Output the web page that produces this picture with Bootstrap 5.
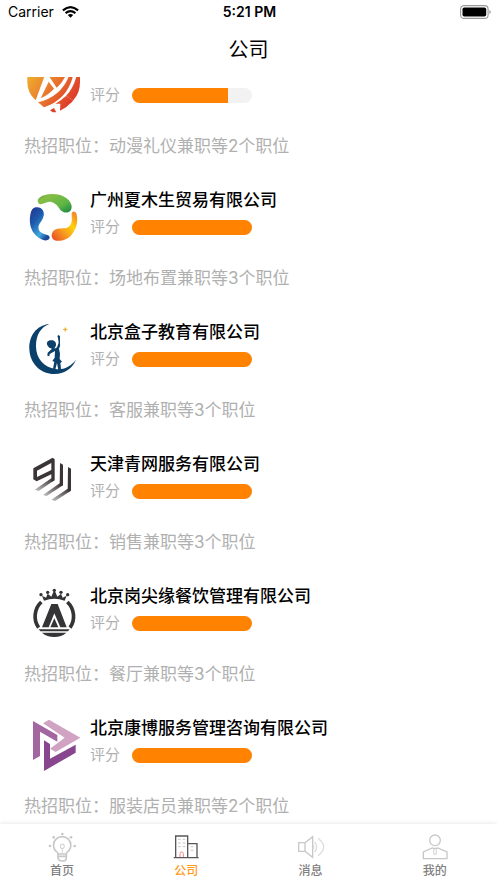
<!DOCTYPE html>
<html lang="zh-CN">
<head>
<meta charset="utf-8">
<meta name="viewport" content="width=device-width, initial-scale=1">
<title>公司</title>
<link href="https://cdn.jsdelivr.net/npm/bootstrap@5.3.0/dist/css/bootstrap.min.css" rel="stylesheet">
<style>
body { font-family: Inter, "Noto Sans CJK SC", sans-serif; color: #000; background: #fff; }
.statusbar { height: 24px; padding: 0 6px 0 8px; font-size: 14px; line-height: 24px; }
.page-title { font-size: 20px; line-height: 53px; font-weight: 400; }
.company-list { gap: 26px; padding: 0 24px 3px; min-height: 0; }
.company-top { gap: 6px; height: 60px; }
.company-logo { width: 60px; height: 60px; }
.company-text { padding-bottom: 6px; }
.company-name { font-size: 17px; line-height: 26px; font-weight: 500; }
.score { gap: 12px; height: 28px; font-size: 15px; color: #b0b0b0; }
.score .progress { width: 120px; height: 15px; border-radius: 8px; background: #f2f2f2; }
.score .progress-bar { background: #ff8200; }
.jobs { margin-top: 16px; font-size: 17px; line-height: 30px; color: #b0b0b0; }
.tabbar { height: 59px; padding-top: 8px; background: #fff; box-shadow: 0 0 5px rgba(0,0,0,.12); }
.tab-item { font-size: 12px; line-height: 18px; font-weight: 500; color: #808080; }
.tab-item.active { color: #ff9a1a; }
.tab-item svg { width: 30px; height: 30px; }
</style>
</head>
<body>
<div class="d-flex flex-column vh-100 overflow-hidden">
  <header class="flex-shrink-0">
    <div class="statusbar row g-0 align-items-center">
      <div class="col d-flex align-items-center gap-2">
        <span>Carrier</span>
        <svg width="17" height="12" viewBox="0 0 17 12" aria-hidden="true"><g fill="none" stroke="#000" stroke-width="2.2"><path d="M.9 4.4Q8.500-2 16.100 4.400"/><path d="M3.600 7.200Q8.500 3.200 13.400 7.200"/></g><path d="M8.500 11.800 5.800 9Q8.500 7 11.200 9Z"/></svg>
      </div>
      <div class="col-auto fw-semibold">5:21 PM</div>
      <div class="col d-flex justify-content-end">
        <svg width="31" height="14" viewBox="0 0 31 14" aria-hidden="true"><rect x=".6" y=".6" width="27.500" height="12.800" rx="3.500" fill="none" stroke="#999" stroke-width="1.100"/><rect x="2.500" y="2.500" width="23.700" height="9" rx="1.800"/><path d="M29.400 5v4q1.400-.6 1.400-2t-1.400-2" fill="#999"/></svg>
      </div>
    </div>
    <h1 class="page-title text-center m-0">公司</h1>
  </header>

  <main class="company-list flex-fill d-flex flex-column justify-content-end overflow-hidden">
    <article class="flex-shrink-0">
      <div class="company-top d-flex">
        <svg class="company-logo flex-shrink-0" viewBox="0 -54 180 180" aria-hidden="true">
          <defs><linearGradient id="g1" gradientUnits="userSpaceOnUse" x1="10" y1="0" x2="150" y2="100"><stop offset="0" stop-color="#f0b22e"/><stop offset=".5" stop-color="#e8752e"/><stop offset="1" stop-color="#db3029"/></linearGradient></defs>
          <g fill="url(#g1)">
            <path d="M10 0H65L35 82Q10 60 10 28Z"/>
            <path d="M74 26 90 47Q75 64 50 76Z"/>
            <path d="M76 0H128Q118 28 98 44L78 14Z"/>
            <path d="M42 88Q116 70 138 0H149Q134 78 60 103Z"/>
            <path d="M160 0H168V28Q168 60 148 82L126 69Q150 44 160 0Z"/>
            <path d="M120 74 144 86Q128 104 108 113L109 92 94 92Q108 84 120 74Z"/>
            <path d="M78 112 90 105 97 118H86Z" fill="#df432a"/>
            <path d="M126 69 148 82 140 91 116 77Z"/>
          </g>
        </svg>
        <div class="company-text d-flex flex-column justify-content-end">
          <div class="score d-flex align-items-center"><span>评分</span><div class="progress" role="progressbar" aria-label="评分" aria-valuenow="80" aria-valuemin="0" aria-valuemax="100"><div class="progress-bar" style="width:80%"></div></div></div>
        </div>
      </div>
      <p class="jobs mb-0">热招职位：动漫礼仪兼职等2个职位</p>
    </article>

    <article class="flex-shrink-0">
      <div class="company-top d-flex">
        <svg class="company-logo flex-shrink-0" viewBox="12 9 180 180" aria-hidden="true">
          <defs><linearGradient id="g2" x1="0" y1="0" x2="1" y2="1"><stop offset="0" stop-color="#4a9b42"/><stop offset=".2" stop-color="#87bd45"/><stop offset=".65" stop-color="#5fb645"/><stop offset="1" stop-color="#168442"/></linearGradient><linearGradient id="g3" x1="0" y1="0" x2=".7" y2="1"><stop offset="0" stop-color="#25318b"/><stop offset=".4" stop-color="#1c59ac"/><stop offset=".8" stop-color="#42a8df"/><stop offset="1" stop-color="#1d4b9a"/></linearGradient><linearGradient id="g4" x1="1" y1="0" x2="0" y2="1"><stop offset="0" stop-color="#ed742b"/><stop offset=".35" stop-color="#ffd20a"/><stop offset=".6" stop-color="#f8a020"/><stop offset="1" stop-color="#e74527"/></linearGradient></defs>
          <path d="M55 56C47 44 66 31 95 30C125 29 149 44 154 62C159 80 144 90 130 84C115 78 117 60 94 54C79 50 70 63 58 60Z" fill="url(#g2)"/>
          <path d="M47 70C64 66 76 82 70 99C64 117 51 121 57 139C63 153 88 149 89 160C89 173 69 172 52 158C33 143 26 118 31 92C33 79 38 72 47 70Z" fill="url(#g3)"/>
          <path d="M155 91C155 79 167 80 170 92C175 112 169 135 155 152C141 169 115 175 101 167C92 161 93 145 104 138C119 127 139 141 151 123C158 111 155 102 155 91Z" fill="url(#g4)"/>
        </svg>
        <div class="company-text d-flex flex-column justify-content-end">
          <h2 class="company-name m-0">广州夏木生贸易有限公司</h2>
          <div class="score d-flex align-items-center"><span>评分</span><div class="progress" role="progressbar" aria-label="评分" aria-valuenow="100" aria-valuemin="0" aria-valuemax="100"><div class="progress-bar" style="width:100%"></div></div></div>
        </div>
      </div>
      <p class="jobs mb-0">热招职位：场地布置兼职等3个职位</p>
    </article>

    <article class="flex-shrink-0">
      <div class="company-top d-flex">
        <svg class="company-logo flex-shrink-0" viewBox="12 9 180 180" aria-hidden="true" fill="#0b406b">
          <path d="M88 24C48 28 27 61 28 98C29 143 63 174 103 174C134 173 158 157 168 131C152 152 130 162 107 159C71 155 48 127 48 91C48 58 61 34 88 24Z"/>
          <path d="M81 85C79 76 88 71 96 73C104 73 109 80 108 88C107 93 103 95 104 98L111 94 116 80 114 65 112 60 116 57 120 61 120 80Q122 91 117 98L120 113 119 129 126 137 121 141 123 158 115 162 111 141 106 160 99 158 103 137 97 135 104 125 105 105 89 114 88 121 82 119 83 110 96 98 88 95Q82 91 81 85Z"/>
          <path d="M136 32 138 38 145 40 138 43 136 49 133 43 127 40 133 38Z" fill="#efb43b"/>
        </svg>
        <div class="company-text d-flex flex-column justify-content-end">
          <h2 class="company-name m-0">北京盒子教育有限公司</h2>
          <div class="score d-flex align-items-center"><span>评分</span><div class="progress" role="progressbar" aria-label="评分" aria-valuenow="100" aria-valuemin="0" aria-valuemax="100"><div class="progress-bar" style="width:100%"></div></div></div>
        </div>
      </div>
      <p class="jobs mb-0">热招职位：客服兼职等3个职位</p>
    </article>

    <article class="flex-shrink-0">
      <div class="company-top d-flex">
        <svg class="company-logo flex-shrink-0" viewBox="12 6 180 180" aria-hidden="true">
          <defs><linearGradient id="g5" x1="1" y1="0" x2="0" y2="1"><stop offset=".25" stop-color="#3b3537"/><stop offset="1" stop-color="#3b3537" stop-opacity="0"/></linearGradient></defs>
          <path d="M40 58 98 26 104 31V94L94 100V76L50 97 40 91ZM51 65V84L94 63V42Z" fill="#3b3537" fill-rule="evenodd"/>
          <path d="M94 88 104 93 56 126 44 122Z M119 103 129 109 80 141 69 138Z M143 119 153 125 105 156 94 152Z" fill="url(#g5)"/>
          <path d="M120 42 129 47V109L119 111Z M144 54 153 59V125L143 128Z" fill="#3b3537"/>
        </svg>
        <div class="company-text d-flex flex-column justify-content-end">
          <h2 class="company-name m-0">天津青网服务有限公司</h2>
          <div class="score d-flex align-items-center"><span>评分</span><div class="progress" role="progressbar" aria-label="评分" aria-valuenow="100" aria-valuemin="0" aria-valuemax="100"><div class="progress-bar" style="width:100%"></div></div></div>
        </div>
      </div>
      <p class="jobs mb-0">热招职位：销售兼职等3个职位</p>
    </article>

    <article class="flex-shrink-0">
      <div class="company-top d-flex">
        <svg class="company-logo flex-shrink-0" viewBox="12 12 180 180" aria-hidden="true" fill="#343436">
          <path d="M64 69A59 59 0 0 0 56 146M142 69A59 59 0 0 1 150 146" fill="none" stroke="#343436" stroke-width="11"/>
          <path d="M56 151H149L144 157H61ZM66 161H139Q124 174 103 174Q81 174 66 161Z"/>
          <path d="M94 75H113L140 145H121L103 103 86 145H66Z M103 118 115 145H91Z"/>
          <path d="M66 50 78 56 83 44 94 53 101 37H105L112 53 123 44 128 56 140 50 134 65Q103 53 72 65Z"/>
          <circle cx="63" cy="47" r="5"/><circle cx="83" cy="40" r="5"/><circle cx="103" cy="34" r="5"/><circle cx="123" cy="40" r="5"/><circle cx="143" cy="47" r="5"/>
        </svg>
        <div class="company-text d-flex flex-column justify-content-end">
          <h2 class="company-name m-0">北京岗尖缘餐饮管理有限公司</h2>
          <div class="score d-flex align-items-center"><span>评分</span><div class="progress" role="progressbar" aria-label="评分" aria-valuenow="100" aria-valuemin="0" aria-valuemax="100"><div class="progress-bar" style="width:100%"></div></div></div>
        </div>
      </div>
      <p class="jobs mb-0">热招职位：餐厅兼职等3个职位</p>
    </article>

    <article class="flex-shrink-0">
      <div class="company-top d-flex">
        <svg class="company-logo flex-shrink-0" viewBox="12 12 180 180" aria-hidden="true">
          <path d="M39 30 112 72V92L60 62V135L39 147Z" fill="#a366a0"/>
          <path d="M69 37 87 26 181 80 107 123 90 113 134 80Z" fill="#d1a3c3"/>
          <path d="M72 88 90 99V143L167 101V125L72 180Z" fill="#87468e"/>
        </svg>
        <div class="company-text d-flex flex-column justify-content-end">
          <h2 class="company-name m-0">北京康博服务管理咨询有限公司</h2>
          <div class="score d-flex align-items-center"><span>评分</span><div class="progress" role="progressbar" aria-label="评分" aria-valuenow="100" aria-valuemin="0" aria-valuemax="100"><div class="progress-bar" style="width:100%"></div></div></div>
        </div>
      </div>
      <p class="jobs mb-0">热招职位：服装店员兼职等2个职位</p>
    </article>
  </main>

  <nav class="tabbar flex-shrink-0 position-relative d-flex" aria-label="主导航">
    <a href="#" class="tab-item flex-fill w-25 d-flex flex-column align-items-center text-decoration-none">
      <svg viewBox="141 36 90 90" aria-hidden="true" fill="none" stroke="#c8c8c8" stroke-width="5"><path d="M174 101Q174 97 168 94A26 26 0 1 1 205 94Q199 97 199 101V113Q199 123 187 123T174 113ZM174 102H199M175 109H198"/><ellipse cx="187" cy="79" rx="6" ry="7" stroke-width="3"/><path d="M187 86V99" stroke-width="2"/><g fill="#c8c8c8" stroke="none"><circle cx="187" cy="42" r="4"/><circle cx="161" cy="52" r="4"/><circle cx="213" cy="52" r="4"/><circle cx="150" cy="78" r="4"/><circle cx="224" cy="78" r="4"/></g></svg>
      <span>首页</span>
    </a>
    <a href="#" class="tab-item active flex-fill w-25 d-flex flex-column align-items-center text-decoration-none" aria-current="page">
      <svg viewBox="514 36 90 90" aria-hidden="true" fill="none" stroke="#57575a" stroke-width="4"><path d="M522 113H597M528 113V48H564V113M564 71H592V113"/><path d="M535 58H543M549 58H557M535 69H543M549 69H557M535 80H543M549 80H557M573 80H581M573 91H581" stroke="#aaa" stroke-width="2"/><path d="M541 111V101Q541 96 546 96T551 101V111" stroke="#f1898b" stroke-width="3"/></svg>
      <span>公司</span>
    </a>
    <a href="#" class="tab-item flex-fill w-25 d-flex flex-column align-items-center text-decoration-none">
      <svg viewBox="146 36 90 90" aria-hidden="true" fill="none" stroke="#c8c8c8" stroke-width="4"><path d="M154 68H173V94H154ZM173 68 196 50V112L173 94"/><path d="M197 75Q202 81 197 88M202 66Q214 81 202 96M212 55Q246 81 212 107" stroke="#ddd"/></svg>
      <span>消息</span>
    </a>
    <a href="#" class="tab-item flex-fill w-25 d-flex flex-column align-items-center text-decoration-none">
      <svg viewBox="519 36 90 90" aria-hidden="true" fill="none" stroke="#c8c8c8" stroke-width="4"><circle cx="564" cy="61" r="16"/><path d="M529 116V96L556 84 564 86 572 84 600 96V116Z"/><path d="M560 87V101Q564 107 568 101V87" stroke="#ddd"/></svg>
      <span>我的</span>
    </a>
  </nav>
</div>
<script src="https://cdn.jsdelivr.net/npm/bootstrap@5.3.0/dist/js/bootstrap.bundle.min.js"></script>
</body>
</html>
